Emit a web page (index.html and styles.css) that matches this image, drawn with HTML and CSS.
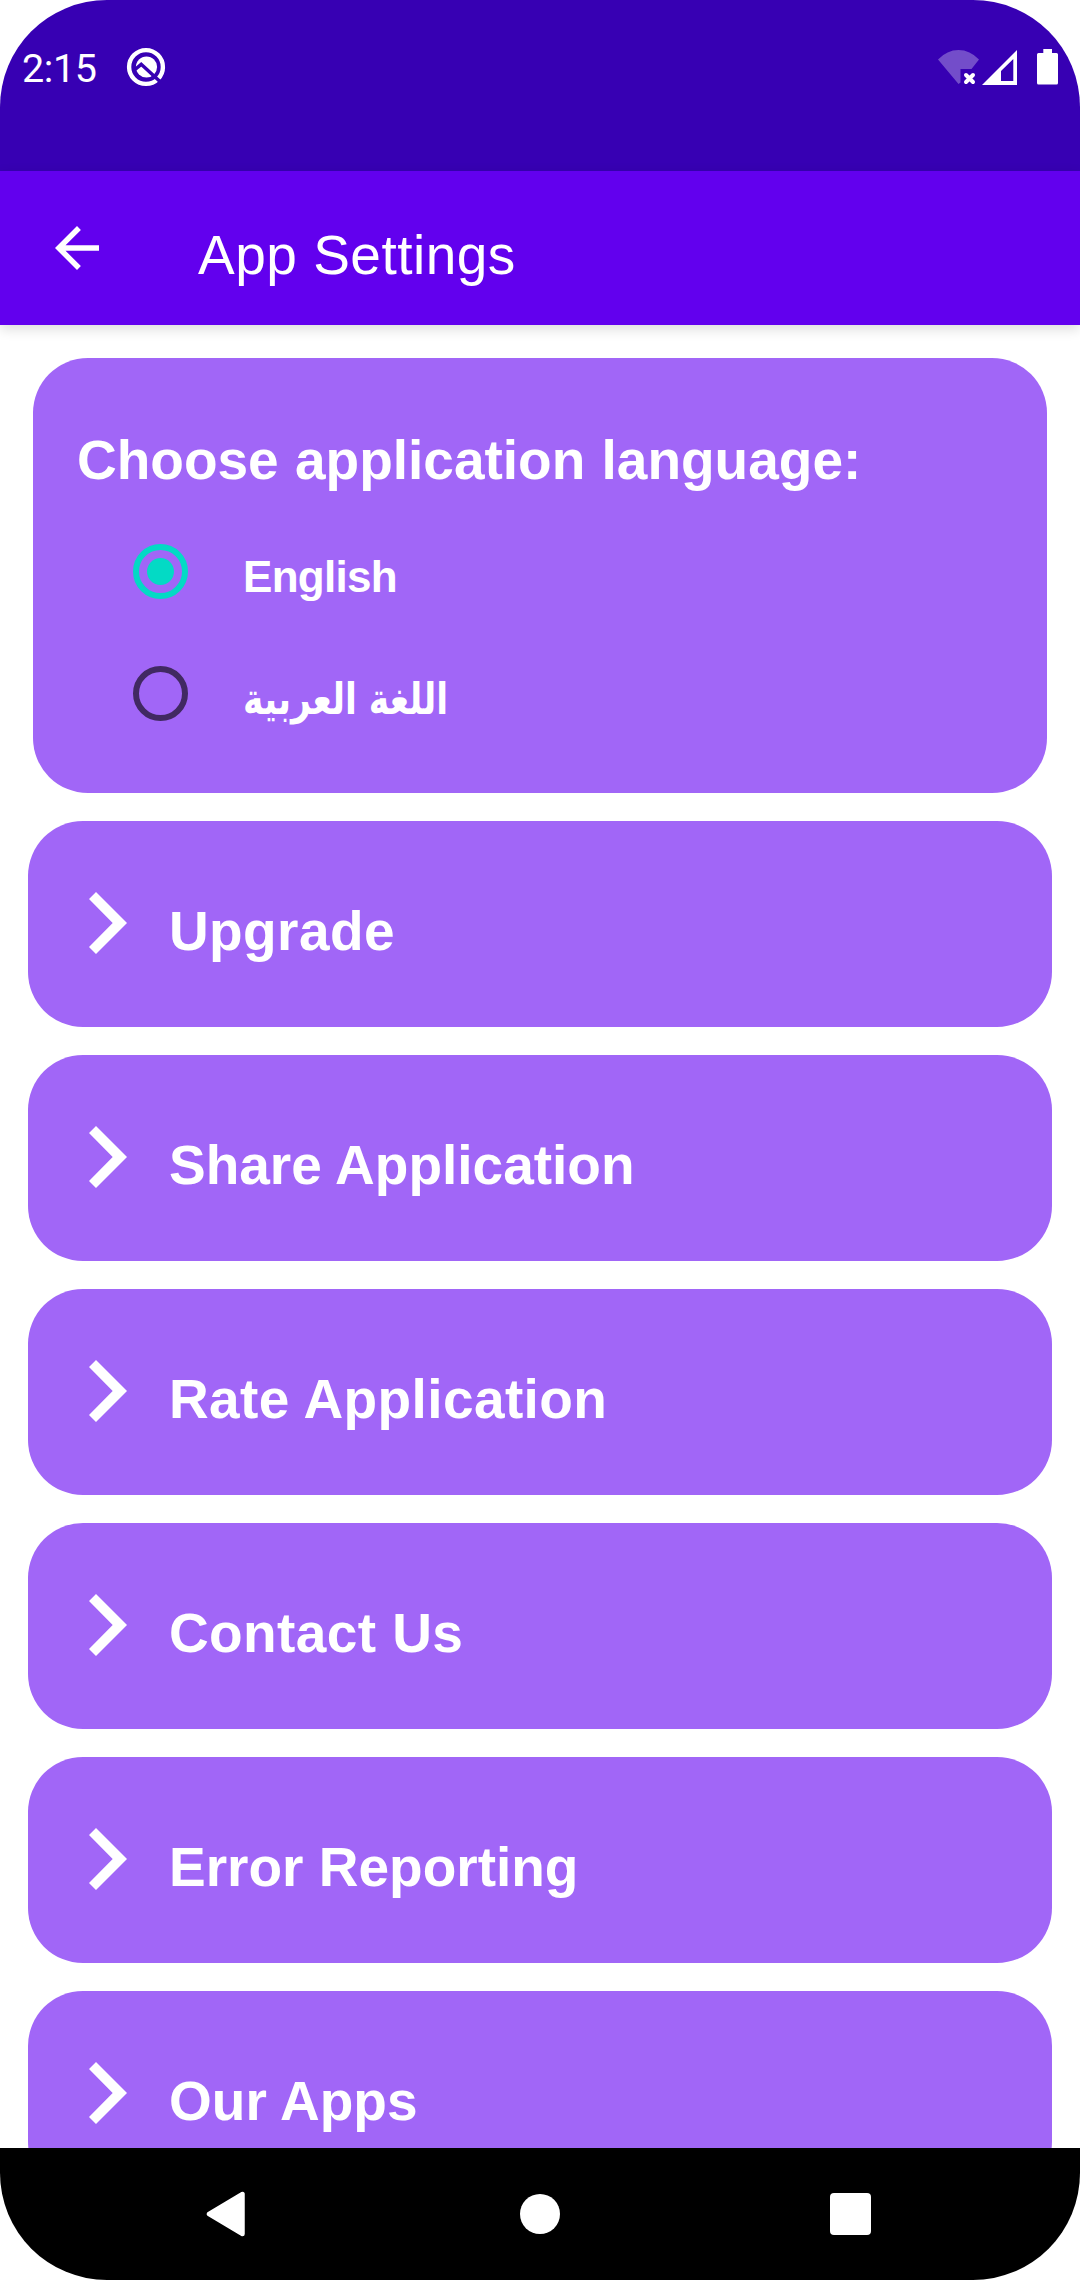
FILE: index.html
```html
<!DOCTYPE html>
<html lang="en">
<head>
	<meta charset="utf-8">
	<title>App Settings</title>
	<link rel="stylesheet" href="styles.css">
</head>
<body>
	<div class="screen">
		<div class="status-bar">
			<span class="time">2:15</span>
			<svg class="q-icon" width="40" height="40" viewBox="0 0 40 40">
				<circle cx="20" cy="20" r="16.9" fill="none" stroke="#fff" stroke-width="4.4"/>
				<circle cx="20.5" cy="20" r="10.6" fill="#fff"/>
				<path d="M9 22.500l6.200-5.200L34 34.500" fill="none" stroke="#3700b3" stroke-width="3.500"/>
			</svg>
			<div class="status-icons">
				<svg class="wifi" width="42" height="36" viewBox="0 0 42 36">
					<path d="M0 10.500Q9 1 20.500 1T41 10.500L33.500 20H22.500V33.500L20.500 35z" fill="#fff" opacity=".3"/>
					<path d="M28 26l7 7M35 26L28 33" stroke="#fff" stroke-width="4" stroke-linecap="round"/>
				</svg>
				<svg class="signal" width="36" height="36" viewBox="0 0 36 36">
					<path fill="#fff" fill-rule="evenodd" d="M0 36L35 1V36zM19 22V32H31.300V10z"/>
				</svg>
				<svg class="battery" width="21" height="36" viewBox="0 0 21 36">
					<path fill="#fff" d="M6.300 0h8.700v4h4.500a1.500 1.500 0 0 1 1.500 1.500v28.500a1.500 1.500 0 0 1-1.500 1.500h-18a1.500 1.500 0 0 1-1.500-1.500v-28.500a1.500 1.500 0 0 1 1.500-1.500h4.800z"/>
				</svg>
			</div>
		</div>

		<div class="toolbar">
			<svg class="back" width="66" height="66" viewBox="0 0 24 24">
				<path fill="#fff" d="M20 11H7.830l5.590-5.590L12 4l-8 8 8 8 1.410-1.410L7.830 13H20v-2z"/>
			</svg>
			<h1 class="title">App Settings</h1>
		</div>

		<div class="content">
			<div class="language-card">
				<h2 class="language-title">Choose application language:</h2>
				<div class="option">
					<span class="radio checked"></span>
					<span class="option-label">English</span>
				</div>
				<div class="option">
					<span class="radio"></span>
					<span class="option-label arabic" lang="ar" dir="rtl">اللغة العربية</span>
				</div>
			</div>

			<div class="card">
				<svg class="chevron" width="38" height="62" viewBox="0 0 38 62"><path d="M7 0L38 31 7 62 0 55 23.700 31 0 7z"/></svg>
				<span class="card-label wide">Upgrade</span>
			</div>
			<div class="card">
				<svg class="chevron" width="38" height="62" viewBox="0 0 38 62"><path d="M7 0L38 31 7 62 0 55 23.700 31 0 7z"/></svg>
				<span class="card-label">Share Application</span>
			</div>
			<div class="card">
				<svg class="chevron" width="38" height="62" viewBox="0 0 38 62"><path d="M7 0L38 31 7 62 0 55 23.700 31 0 7z"/></svg>
				<span class="card-label wide">Rate Application</span>
			</div>
			<div class="card">
				<svg class="chevron" width="38" height="62" viewBox="0 0 38 62"><path d="M7 0L38 31 7 62 0 55 23.700 31 0 7z"/></svg>
				<span class="card-label wide">Contact Us</span>
			</div>
			<div class="card">
				<svg class="chevron" width="38" height="62" viewBox="0 0 38 62"><path d="M7 0L38 31 7 62 0 55 23.700 31 0 7z"/></svg>
				<span class="card-label">Error Reporting</span>
			</div>
			<div class="card">
				<svg class="chevron" width="38" height="62" viewBox="0 0 38 62"><path d="M7 0L38 31 7 62 0 55 23.700 31 0 7z"/></svg>
				<span class="card-label">Our Apps</span>
			</div>
		</div>

		<div class="nav-bar">
			<svg width="40" height="46" viewBox="0 0 40 46"><path d="M3 23L36.500 3V43z" fill="#fff" stroke="#fff" stroke-width="4.500" stroke-linejoin="round"/></svg>
			<span class="home"></span>
			<span class="recent"></span>
		</div>
	</div>
</body>
</html>
```
FILE: styles.css
```css
* {
	box-sizing: border-box;
}
body {
	margin: 0;
	background-color: #fff;
	font-family: "Liberation Sans", Arial, sans-serif;
	color: #fff;
}
.screen {
	display: flex;
	flex-direction: column;
	width: 1080px;
	height: 2280px;
	border-radius: 107px;
	overflow: hidden;
	background-color: #fff;
}
svg {
	display: block;
	flex-shrink: 0;
}

/* status bar */
.status-bar {
	display: flex;
	align-items: flex-start;
	height: 171px;
	padding: 47px 22px 0 22px;
	background-color: #3700b3;
}
.time {
	width: 104px;
	font-family: Roboto, sans-serif;
	font-size: 39.5px;
	line-height: 44px;
	letter-spacing: -0.4px;
}
.status-icons {
	display: flex;
	margin-left: auto;
	padding-top: 2px;
}
.signal {
	margin-left: 2px;
}
.battery {
	margin-left: 19px;
}

/* toolbar */
.toolbar {
	display: flex;
	align-items: flex-start;
	height: 154px;
	flex-shrink: 0;
	padding: 44px 44px 0;
	background-color: #6200ee;
	box-shadow: 0 4px 12px rgba(0, 0, 0, 0.14);
}
.title {
	margin: 9px 0 0 88px;
	font-size: 55px;
	font-weight: normal;
	line-height: 62px;
	letter-spacing: 0.5px;
}

/* settings */
.content {
	display: flex;
	flex-direction: column;
	flex: 1;
	min-height: 0;
	gap: 28px;
	padding: 33px 28px 0;
}
.language-card {
	flex-shrink: 0;
	height: 435px;
	margin: 0 5px;
	padding: 71px 44px 0;
	border-radius: 55px;
	background-color: #a166f7;
}
.language-title {
	margin: 0 0 21px;
	font-size: 55px;
	line-height: 62px;
	word-spacing: 1px;
	white-space: nowrap;
}
.option {
	display: flex;
	align-items: center;
	height: 122px;
	padding-left: 56px;
	padding-bottom: 4px;
}
.radio {
	display: flex;
	width: 55px;
	height: 55px;
	border: 6px solid #412962;
	border-radius: 50%;
}
.radio.checked {
	border-color: #03dac5;
}
.radio.checked::after {
	content: "";
	width: 27px;
	height: 27px;
	margin: auto;
	border-radius: 50%;
	background-color: #03dac5;
}
.option-label {
	margin-left: 55px;
	padding-top: 11px;
	font-size: 44px;
	font-weight: bold;
	line-height: 50px;
	letter-spacing: -0.7px;
}
.arabic {
	font-family: "DejaVu Sans", sans-serif;
	letter-spacing: 0;
	transform: scaleX(0.785);
	transform-origin: left;
}
.card {
	display: flex;
	align-items: flex-start;
	flex-shrink: 0;
	height: 206px;
	padding: 71px 61px 0;
	border-radius: 55px;
	background-color: #a166f7;
}
.chevron {
	fill: #fff;
}
.card-label {
	margin: 8px 0 0 42px;
	font-size: 55px;
	font-weight: bold;
	line-height: 62px;
}
.card-label.wide {
	letter-spacing: 0.4px;
}

/* navigation bar */
.nav-bar {
	display: flex;
	align-items: center;
	flex-shrink: 0;
	z-index: 1;
	height: 132px;
	padding-left: 206px;
	background-color: #000;
}
.home {
	width: 40px;
	height: 40px;
	margin: 0 270px 0 274px;
	border-radius: 50%;
	background-color: #fff;
}
.recent {
	width: 41px;
	height: 42px;
	border-radius: 4px;
	background-color: #fff;
}
```
